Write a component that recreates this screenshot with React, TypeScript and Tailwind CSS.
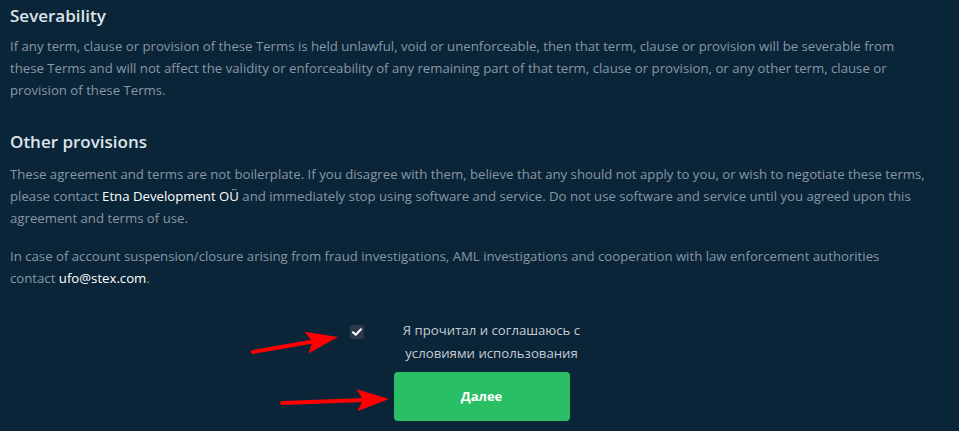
const Arrow = ({ x1, y1, x2, y2 }: { x1: number; y1: number; x2: number; y2: number }) => {
  const dx = x2 - x1
  const dy = y2 - y1
  const len = Math.hypot(dx, dy)
  const ux = dx / len
  const uy = dy / len
  const bx = x2 - ux * 32
  const by = y2 - uy * 32
  const px = -uy
  const py = ux
  const head = `${x2},${y2} ${bx + px * 11},${by + py * 11} ${bx + ux * 6},${by + uy * 6} ${bx - px * 11},${by - py * 11}`
  return (
    <g>
      <line x1={x1} y1={y1} x2={bx + ux * 8} y2={by + uy * 8} stroke="#ff0000" strokeWidth={4} strokeLinecap="round" />
      <polygon points={head} fill="#ff0000" />
    </g>
  )
}

export default function App() {
  return (
    <div className="relative w-[959px] h-[431px] overflow-hidden bg-[#0b2538] font-['Open_Sans',sans-serif]">
      <div className="pl-[10px] pt-[3px]">
        <h2 className="text-[17px] leading-[26px] font-semibold text-[#dde4ea]">Severability</h2>
        <p className="mt-[6px] whitespace-nowrap text-[13.2px] leading-[22px] text-[#8797a5]">
          If any term, clause or provision of these Terms is held unlawful, void or unenforceable, then that term, clause or provision will be severable from
          <br />
          these Terms and will not affect the validity or enforceability of any remaining part of that term, clause or provision, or any other term, clause or
          <br />
          provision of these Terms.
        </p>

        <h2 className="mt-[28px] text-[17px] leading-[26px] font-semibold text-[#dde4ea]">Other provisions</h2>
        <p className="mt-[8px] whitespace-nowrap text-[13.2px] leading-[22px] text-[#8797a5]">
          These agreement and terms are not boilerplate. If you disagree with them, believe that any should not apply to you, or wish to negotiate these terms,
          <br />
          please contact <span className="text-white">Etna Development OÜ</span> and immediately stop using software and service. Do not use software and service until you agreed upon this
          <br />
          agreement and terms of use.
        </p>
        <p className="mt-[16px] whitespace-nowrap text-[13.2px] leading-[22px] text-[#8797a5]">
          In case of account suspension/closure arising from fraud investigations, AML investigations and cooperation with law enforcement authorities
          <br />
          contact <span className="text-white">ufo@stex.com</span>.
        </p>

        <div className="mt-[30px] flex items-start justify-center gap-[28px] pr-[28px]">
          <div className="mt-[6px] flex h-[14px] w-[14px] items-center justify-center rounded-[2px] bg-[#2a3a4a]">
            <svg width="10" height="8" viewBox="0 0 10 8">
              <path d="M1 4.2 L3.8 6.8 L9 1.2" fill="none" stroke="#ffffff" strokeWidth="2" strokeLinecap="round" strokeLinejoin="round" />
            </svg>
          </div>
          <label className="w-[200px] text-center text-[13.2px] leading-[23px] text-[#c3ccd4]">
            Я прочитал и соглашаюсь с условиями использования
          </label>
        </div>

        <div className="mt-[7px] flex justify-center pr-[6px]">
          <button className="h-[49px] w-[176px] rounded-[4px] bg-[#29bf65] text-[13px] font-bold text-white">
            Далее
          </button>
        </div>
      </div>

      <svg className="pointer-events-none absolute left-0 top-0" width="959" height="431">
        <Arrow x1={253} y1={352} x2={338} y2={337} />
        <Arrow x1={282} y1={403} x2={389} y2={399} />
      </svg>
    </div>
  )
}
